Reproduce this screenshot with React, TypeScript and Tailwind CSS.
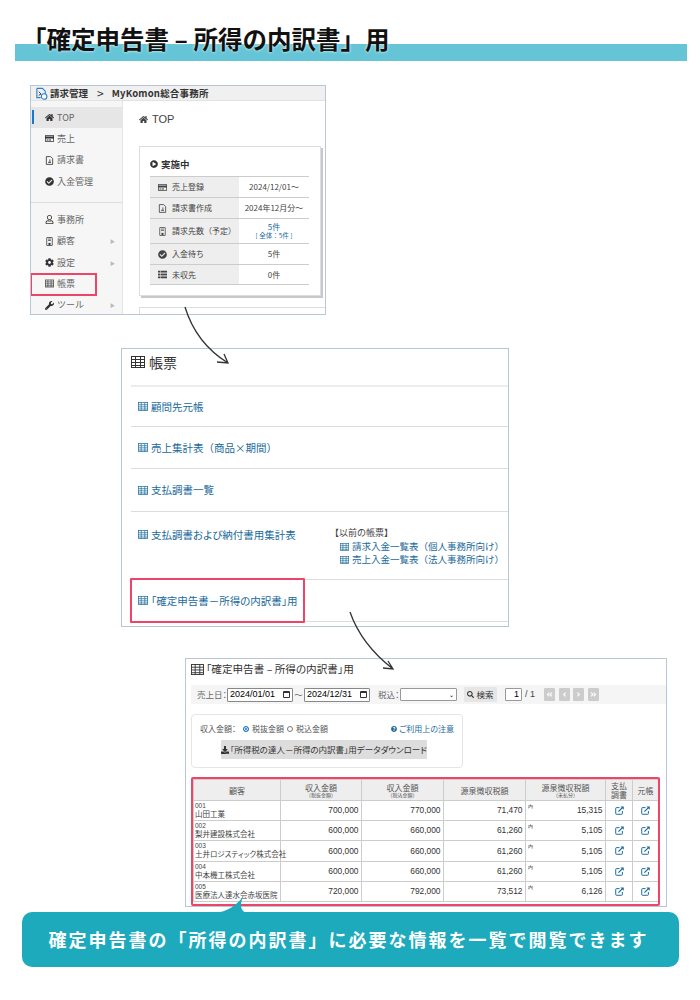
import type { ReactNode } from 'react';
import {
  FaAngleDoubleLeft,
  FaAngleDoubleRight,
  FaAngleLeft,
  FaAngleRight,
  FaCheckCircle,
  FaCog,
  FaDownload,
  FaHome,
  FaPlayCircle,
  FaQuestionCircle,
  FaRegCreditCard,
  FaRegUser,
  FaSearch,
  FaWrench,
} from 'react-icons/fa';

const TableIcon = ({ className }: { className: string }) => (
  <svg viewBox="0 0 14 12" fill="none" stroke="currentColor" strokeWidth="1" className={className}>
    <rect x="0.5" y="0.5" width="13" height="11" />
    <path d="M0.5 3.5H13.5M0.5 6.5H13.5M0.5 9.5H13.5M4.5 0.5V11.5M9.5 0.5V11.5" />
  </svg>
);

const DocIcon = ({ className }: { className: string }) => (
  <svg viewBox="0 0 10 12" fill="none" stroke="currentColor" strokeWidth="1.1" className={className}>
    <path d="M0.8 0.8H6.5L9.2 3.4V11.2H0.8Z" />
    <path d="M3 8.5H7M5.5 4.5V8.5" />
  </svg>
);

const PhoneIcon = ({ className }: { className: string }) => (
  <svg viewBox="0 0 10 13" fill="none" stroke="currentColor" strokeWidth="1.1" className={className}>
    <rect x="1" y="0.7" width="8" height="11.6" rx="0.5" />
    <rect x="3.5" y="8.5" width="3" height="3" fill="currentColor" stroke="none" />
    <path d="M3 3H7M3 5H7" />
  </svg>
);

const ListIcon = ({ className }: { className: string }) => (
  <svg viewBox="0 0 12 10" fill="currentColor" className={className}>
    <rect x="0" y="0" width="3" height="2.4" />
    <rect x="3.6" y="0" width="8.4" height="2.4" />
    <rect x="0" y="3.8" width="3" height="2.4" />
    <rect x="3.6" y="3.8" width="8.4" height="2.4" />
    <rect x="0" y="7.6" width="3" height="2.4" />
    <rect x="3.6" y="7.6" width="8.4" height="2.4" />
  </svg>
);

const OpenIcon = () => (
  <svg viewBox="0 0 10 10" fill="none" className="w-[9px] h-[9px] mx-auto text-[#1a6a9a]">
    <path d="M5 1.8H1.6A0.8 0.8 0 0 0 0.8 2.6V8.4A0.8 0.8 0 0 0 1.6 9.2H7.4A0.8 0.8 0 0 0 8.2 8.4V5.5" stroke="currentColor" strokeWidth="1.1" />
    <path d="M3.8 6.3L8 2" stroke="currentColor" strokeWidth="1.3" />
    <path d="M6 0.5H9.7V4.2Z" fill="currentColor" />
  </svg>
);

const AppLogo = () => (
  <svg viewBox="0 0 14 14" fill="none" className="w-[13px] h-[13px] shrink-0">
    <path d="M2 1.5H8L11 4.5V9" stroke="#2f7fc0" strokeWidth="1.2" />
    <path d="M2 1.5V11.5H6" stroke="#2f7fc0" strokeWidth="1.2" />
    <circle cx="9.8" cy="10.2" r="3" stroke="#2f7fc0" strokeWidth="1.2" fill="#fff" />
    <path d="M4 5L6.5 7.5L4 9" stroke="#333" strokeWidth="1" />
  </svg>
);

const iconCls = 'w-[9px] h-[9px]';

const mainMenu = [
  { label: 'TOP', icon: <FaHome className={iconCls} />, active: true },
  { label: '売上', icon: <FaRegCreditCard className={iconCls} /> },
  { label: '請求書', icon: <DocIcon className={iconCls} /> },
  { label: '入金管理', icon: <FaCheckCircle className={iconCls} /> },
];

const subMenu = [
  { label: '事務所', icon: <FaRegUser className={iconCls} /> },
  { label: '顧客', icon: <PhoneIcon className={iconCls} />, more: true },
  { label: '設定', icon: <FaCog className={iconCls} />, more: true },
  { label: '帳票', icon: <TableIcon className={iconCls} /> },
  { label: 'ツール', icon: <FaWrench className={iconCls} />, more: true },
];

const statusRows: { label: string; icon: ReactNode; value: ReactNode; h: string }[] = [
  { label: '売上登録', icon: <FaRegCreditCard className={iconCls} />, value: '2024/12/01～', h: 'h-[21px]' },
  { label: '請求書作成', icon: <DocIcon className={iconCls} />, value: '2024年12月分～', h: 'h-[21px]' },
  {
    label: '請求先数（予定）',
    icon: <PhoneIcon className={iconCls} />,
    value: (
      <div className="text-[#1a6a9a] leading-[8px]">
        <div>5件</div>
        <div className="text-[6.5px]">[ 全体：5件 ]</div>
      </div>
    ),
    h: 'h-[25px]',
  },
  { label: '入金待ち', icon: <FaCheckCircle className={iconCls} />, value: '5件', h: 'h-[21px]' },
  { label: '未収先', icon: <ListIcon className={iconCls} />, value: '0件', h: 'h-[20px]' },
];

const MenuRow = ({ label, icon, active, more }: { label: string; icon: ReactNode; active?: boolean; more?: boolean }) => (
  <div className={`relative flex items-center h-[21.3px] pl-[10px] text-[9px] text-[#666] ${active ? 'bg-[#e6e6e6]' : ''}`}>
    {active && <div className="absolute left-[1px] top-[3px] w-[2px] h-[14px] bg-[#1976d2]" />}
    <span className="w-[16px] flex justify-center text-[#333]">{icon}</span>
    <span>{label}</span>
    {more && <span className="ml-auto mr-[7px] text-[5px] text-[#bbb]">▶</span>}
  </div>
);

const TopPanel = () => (
  <div className="ml-[30px] mt-[23px] w-[296px] h-[230px] border border-[#b9c6d8] overflow-hidden relative">
    <div className="flex items-center h-[15px] pl-[4px] gap-[2px] bg-[#f0f0f0] border-b border-[#e2e2e2] text-[9.5px] font-bold text-[#333]">
      <AppLogo />
      <span>請求管理</span>
      <span className="ml-[7px] text-[12px] leading-[12px] font-normal">&gt;</span>
      <span className="ml-[6px] tracking-[0.2px]">MyKomon総合事務所</span>
    </div>
    <div className="flex h-[213px]">
      <div className="w-[92px] shrink-0 bg-[#f6f6f6] border-r border-[#e4e4e4] pt-[6px]">
        {mainMenu.map((m) => (
          <MenuRow key={m.label} {...m} />
        ))}
        <div className="mt-[10px] mb-[6px] border-t border-[#ddd]" />
        {subMenu.map((m) => (
          <MenuRow key={m.label} {...m} />
        ))}
      </div>
      <div className="flex-1 pl-[16px] min-w-0">
        <div className="flex items-center gap-[4px] h-[14px] mt-[11px] text-[11px] text-[#444] font-['Liberation_Sans',sans-serif]">
          <FaHome className="w-[9px] h-[9px]" />
          <span>TOP</span>
        </div>
        <div className="mt-[20px] w-[182px] h-[150px] bg-white border border-[#ddd] shadow-[2px_2px_0_#c8c8c8] pl-[10px] pr-[11px] pt-[10px]">
          <div className="flex items-center gap-[3px] h-[14px] text-[9.5px] font-bold text-[#333]">
            <FaPlayCircle className="w-[8px] h-[8px]" />
            <span>実施中</span>
          </div>
          <div className="mt-[5px] border-t border-[#ccc]">
            {statusRows.map((r) => (
              <div key={r.label} className={`flex ${r.h} border-b border-[#ccc] text-[8px] text-[#444]`}>
                <div className="w-[89px] shrink-0 bg-[#eeeeee] flex items-center pl-[8px] gap-[5px]">
                  {r.icon}
                  <span>{r.label}</span>
                </div>
                <div className="flex-1 flex items-center justify-center text-center">{r.value}</div>
              </div>
            ))}
          </div>
        </div>
        <div className="mt-[11px] w-[200px] h-[20px] border border-[#ddd]" />
      </div>
    </div>
    <div className="absolute left-[-1px] top-[187px] w-[67px] h-[23px] border-2 border-[#ee4468]" />
  </div>
);

const ReportLink = ({ children, small }: { children: ReactNode; small?: boolean }) => (
  <div className={`flex items-center gap-[3px] text-[#1a6a9a] ${small ? 'text-[9.5px] h-[13px]' : 'text-[10.5px]'}`}>
    <TableIcon className={small ? 'w-[9px] h-[8px] shrink-0' : 'w-[10px] h-[9px] shrink-0'} />
    <span className="whitespace-nowrap">{children}</span>
  </div>
);

const ReportPanel = () => (
  <div className="ml-[121px] mt-[33px] w-[388px] h-[279px] border border-[#b9c6d8] overflow-hidden">
    <div className="flex items-center h-[36px] pl-[9px] gap-[4px] text-[14px] text-[#333] pb-[10px]">
      <TableIcon className="w-[14px] h-[12px]" />
      <span>帳票</span>
    </div>
    <div className="ml-[9px]">
      <div className="flex items-center h-[41px] pl-[7px] border-t-2 border-[#ececec]">
        <ReportLink>顧問先元帳</ReportLink>
      </div>
      <div className="flex items-center h-[42px] pl-[7px] border-t border-[#dddddd]">
        <ReportLink>売上集計表（商品×期間）</ReportLink>
      </div>
      <div className="flex items-center h-[43px] pl-[7px] border-t border-[#dddddd]">
        <ReportLink>支払調書一覧</ReportLink>
      </div>
      <div className="flex h-[68px] pl-[7px] pt-[15px] border-t border-[#dddddd]">
        <div className="w-[195px] shrink-0">
          <ReportLink>
            <span className="[font-feature-settings:'palt']">支払調書および納付書用集計表</span>
          </ReportLink>
        </div>
        <div className="-mt-[1px]">
          <div className="-ml-[3px] text-[9px] h-[13px] leading-[13px] text-[#444]">【以前の帳票】</div>
          <div className="pl-[7px] mt-[1px]">
            <ReportLink small>請求入金一覧表（個人事務所向け）</ReportLink>
            <ReportLink small>売上入金一覧表（法人事務所向け）</ReportLink>
          </div>
        </div>
      </div>
      <div className="relative flex items-center h-[43px] pl-[7px] border-t border-[#dddddd] border-b">
        <ReportLink>
          <span className="[font-feature-settings:'palt']">「確定申告書－所得の内訳書」用</span>
        </ReportLink>
        <div className="absolute left-[-1px] top-[-2px] w-[175px] h-[45px] border-2 border-[#ee4468] rounded-[1px]" />
      </div>
    </div>
  </div>
);

const DateInput = ({ value }: { value: string }) => (
  <div className="flex items-center justify-between w-[66px] h-[14px] px-[2px] bg-white border border-[#888] rounded-[1px] text-[9px] text-black font-['Liberation_Sans',sans-serif]">
    <span>{value}</span>
    <span className="w-[7px] h-[7px] border border-[#333] border-t-2 rounded-[1px]" />
  </div>
);

const PageButton = ({ children }: { children: ReactNode }) => (
  <span className="flex items-center justify-center w-[11px] h-[13px] bg-[#cccccc] rounded-[1px] text-white">{children}</span>
);

const rows = [
  { code: '001', name: '山田工業', a: '700,000', b: '770,000', c: '71,470', d: '15,315' },
  { code: '002', name: '梨井建設株式会社', a: '600,000', b: '660,000', c: '61,260', d: '5,105' },
  { code: '003', name: '土井ロジスティック株式会社', a: '600,000', b: '660,000', c: '61,260', d: '5,105' },
  { code: '004', name: '中本機工株式会社', a: '600,000', b: '660,000', c: '61,260', d: '5,105' },
  { code: '005', name: '医療法人達水会赤坂医院', a: '720,000', b: '792,000', c: '73,512', d: '6,126' },
];

const thCls = 'border border-[#cccccc] bg-[#eeeeee] font-normal text-[8px] text-[#555] leading-[9px] p-0';
const tdCls = "border border-[#cccccc] text-right pr-[2.5px] text-[8.4px] text-[#333] font-['Liberation_Sans',sans-serif]";

const HeadCell = ({ main, sub }: { main: string; sub?: string }) => (
  <th className={thCls}>
    <div>{main}</div>
    {sub && <div className="text-[5px] leading-[6px]">{sub}</div>}
  </th>
);

const LedgerTable = () => (
  <table className="table-fixed border-collapse w-[465px]">
    <colgroup>
      <col className="w-[87px]" />
      <col className="w-[81px]" />
      <col className="w-[82px]" />
      <col className="w-[82px]" />
      <col className="w-[80px]" />
      <col className="w-[27px]" />
      <col className="w-[26px]" />
    </colgroup>
    <thead>
      <tr className="h-[21px]">
        <HeadCell main="顧客" />
        <HeadCell main="収入金額" sub="（税抜金額）" />
        <HeadCell main="収入金額" sub="（税込金額）" />
        <HeadCell main="源泉徴収税額" />
        <HeadCell main="源泉徴収税額" sub="（未払分）" />
        <th className={thCls}>
          <div>支払</div>
          <div>調書</div>
        </th>
        <HeadCell main="元帳" />
      </tr>
    </thead>
    <tbody>
      {rows.map((r) => (
        <tr key={r.code} className="h-[20.2px]">
          <td className="border border-[#cccccc] text-left px-[1px] text-[#444]">
            <div className="text-[6.5px] leading-[7px] font-['Liberation_Sans',sans-serif]">{r.code}</div>
            <div className="text-[7.5px] leading-[10px] whitespace-nowrap [font-feature-settings:'palt']">{r.name}</div>
          </td>
          <td className={tdCls}>{r.a}</td>
          <td className={tdCls}>{r.b}</td>
          <td className={tdCls}>{r.c}</td>
          <td className={`${tdCls} relative`}>
            <span className="absolute left-[2px] top-[2px] text-[5px] leading-[6px]">内</span>
            {r.d}
          </td>
          <td className="border border-[#cccccc]">
            <OpenIcon />
          </td>
          <td className="border border-[#cccccc]">
            <OpenIcon />
          </td>
        </tr>
      ))}
    </tbody>
  </table>
);

const LedgerPanel = () => (
  <div className="ml-[185px] mt-[31px] w-[482px] h-[249px] border border-[#b9c6d8] overflow-hidden pl-[5px]">
    <div className="flex items-center h-[26px] gap-[2px] pb-[6px] text-[10.6px] text-[#333] [font-feature-settings:'palt']">
      <TableIcon className="w-[13px] h-[11px]" />
      <span>「確定申告書 – 所得の内訳書」用</span>
    </div>
    <div className="flex items-center h-[19px] bg-[#f5f5f5] pl-[6px] text-[8.5px] text-[#666] whitespace-nowrap [font-feature-settings:'palt']">
      <span className="w-[30px]">売上日：</span>
      <DateInput value="2024/01/01" />
      <span className="w-[11px] text-center">～</span>
      <DateInput value="2024/12/31" />
      <span className="ml-[8px] w-[22px]">税込：</span>
      <div className="flex items-center justify-end w-[57px] h-[13px] pr-[2px] bg-white border border-[#999] rounded-[1px] text-[6px] text-black">⌄</div>
      <div className="flex items-center justify-center gap-[2px] ml-[7px] w-[33px] h-[15px] bg-[#e6e6e6] rounded-[1px] text-[#333]">
        <FaSearch className="w-[7px] h-[7px]" />
        <span>検索</span>
      </div>
      <div className="flex items-center justify-end ml-[8px] w-[17px] h-[13px] pr-[2px] bg-white border border-[#999] rounded-[1px] text-[9px] text-black font-['Liberation_Sans',sans-serif]">1</div>
      <span className="ml-[3px] w-[16px] text-[9px] text-[#444] font-['Liberation_Sans',sans-serif]">/ 1</span>
      <div className="flex gap-[3.5px] ml-[3px]">
        <PageButton><FaAngleDoubleLeft className="w-[7px] h-[7px]" /></PageButton>
        <PageButton><FaAngleLeft className="w-[7px] h-[7px]" /></PageButton>
        <PageButton><FaAngleRight className="w-[7px] h-[7px]" /></PageButton>
        <PageButton><FaAngleDoubleRight className="w-[7px] h-[7px]" /></PageButton>
      </div>
    </div>
    <div className="mt-[10px] w-[272px] h-[54px] border border-[#e5e5e5] rounded-[4px] pt-[7px] text-[8px] text-[#555] [font-feature-settings:'palt'] whitespace-nowrap">
      <div className="flex items-center h-[14px] pl-[8px]">
        <span className="w-[43px]">収入金額：</span>
        <span className="w-[6px] h-[6px] rounded-full border border-[#1976d2] bg-[#1976d2] shadow-[inset_0_0_0_1px_#fff]" />
        <span className="ml-[3px] w-[35px]">税抜金額</span>
        <span className="w-[6px] h-[6px] rounded-full border border-[#777]" />
        <span className="ml-[3px]">税込金額</span>
        <span className="ml-auto mr-[8px] flex items-center gap-[2px] text-[#1a6a9a]">
          <FaQuestionCircle className="w-[6px] h-[6px]" />
          ご利用上の注意
        </span>
      </div>
      <div className="flex items-center justify-center gap-[1px] ml-[29px] mt-[4px] w-[206px] h-[19px] bg-[#dddddd] rounded-[1px] text-[8.5px] text-[#333]">
        <FaDownload className="w-[8px] h-[8px]" />
        <span>「所得税の達人－所得の内訳書」用データダウンロード</span>
      </div>
    </div>
    <div className="mt-[9px] w-[469px] h-[129px] border-2 border-[#ee4468] rounded-[2px] overflow-hidden">
      <LedgerTable />
    </div>
  </div>
);

export default function App() {
  return (
    <div className="relative w-[700px] h-[1000px] overflow-hidden bg-white font-['Noto_Sans_CJK_JP',sans-serif]">
      <div className="relative h-[62px] pt-[44px] pl-[15px]">
        <div className="w-[672px] h-[17px] bg-[#65c5d6]" />
        <h1 className="absolute left-[22px] top-[21px] text-[24.5px] leading-[36px] font-bold text-[#111] whitespace-nowrap [text-shadow:0_0_3px_#fff]">
          「確定申告書 – 所得の内訳書」用
        </h1>
      </div>
      <TopPanel />
      <ReportPanel />
      <LedgerPanel />
      <div className="ml-[22px] mt-[5px] w-[657px] h-[55px] rounded-[10px] bg-[#1eaabd] flex items-center justify-center pr-[4px] text-[18px] font-bold tracking-[2px] text-white">
        確定申告書の「所得の内訳書」に必要な情報を一覧で閲覧できます
      </div>
      <svg viewBox="0 0 700 1000" className="absolute inset-0 w-[700px] h-[1000px] pointer-events-none" fill="none">
        <path d="M185 307C192 330 207 350 228 363M217 362L228 363L224 354" stroke="#333" strokeWidth="1.3" />
        <path d="M350 612C358 635 375 655 393 669M383 668L393 669L388 661" stroke="#333" strokeWidth="1.3" />
        <path d="M214 913C228 912 236 905 243 897C240 904 240 910 246 913Z" fill="#1eaabd" />
      </svg>
    </div>
  );
}
